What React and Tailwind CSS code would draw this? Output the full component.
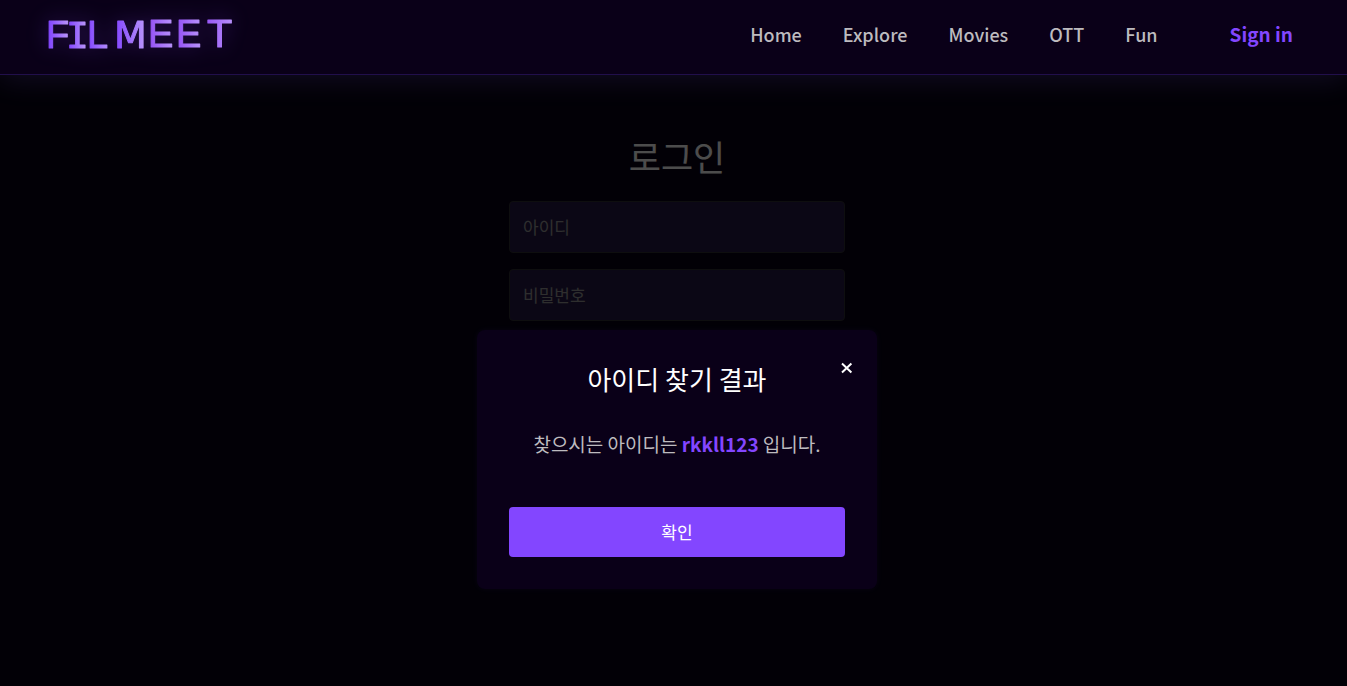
const links = ['Home', 'Explore', 'Movies', 'OTT', 'Fun'];

const SANS = 'Liberation Sans, sans-serif';
const WIDE = 'DejaVu Sans, sans-serif';

const letters = [
  { c: 'F', x: 46, y: 48, left: 49, right: 69, font: SANS },
  { c: 'I', x: 66, y: 48, left: 69, right: 86, font: 'Liberation Mono, monospace' },
  { c: 'L', x: 87, y: 48, left: 88, right: 111, font: SANS },
  { c: 'M', x: 114, y: 48, left: 115, right: 146, font: WIDE },
  { c: 'E', x: 148, y: 47, left: 149, right: 174, font: SANS },
  { c: 'E', x: 176, y: 47, left: 177, right: 202, font: SANS },
  { c: 'T', x: 208, y: 47, left: 204, right: 235, font: WIDE },
];

const stops = letters.flatMap(({ left, right }, i) => [
  { offset: left / 260, color: i < 4 ? '#8346ff' : '#9450f5' },
  { offset: right / 260, color: '#bb97fb' },
]);

function Logo() {
  return (
    <svg
      width="260"
      height="74"
      viewBox="0 0 260 74"
      role="img"
      aria-label="FILMEET"
      className="block drop-shadow-[0_0_10px_rgba(131,70,255,0.3)]"
    >
      <defs>
        <linearGradient id="wordmark" gradientUnits="userSpaceOnUse" x1="0" y1="0" x2="260" y2="0">
          {stops.map(({ offset, color }, i) => (
            <stop key={i} offset={offset} stopColor={color} />
          ))}
        </linearGradient>
      </defs>
      <text
        fontSize="38"
        fill="url(#wordmark)"
        stroke="url(#wordmark)"
        strokeWidth="1"
        strokeLinejoin="round"
      >
        {letters.map(({ c, x, y, font }, i) => (
          <tspan key={i} x={x} y={y} fontFamily={font}>
            {c}
          </tspan>
        ))}
      </text>
    </svg>
  );
}

function Header() {
  return (
    <header className="relative z-20 flex h-[75px] items-center justify-between border-b border-[#210f4b] bg-[#0a0018] pr-[54px] shadow-[0_4px_30px_rgba(131,90,230,0.14)]">
      <a href="#home">
        <Logo />
      </a>
      <nav className="flex items-center pb-1.5 text-[18px] leading-7 font-medium text-[#bdbbbf]">
        <div className="flex gap-[41px]">
          {links.map((label) => (
            <a key={label} href={'#' + label.toLowerCase()}>
              {label}
            </a>
          ))}
        </div>
        <a href="#signin" className="ml-[72px] text-[19px] font-bold text-[#8346ff]">
          Sign in
        </a>
      </nav>
    </header>
  );
}

function Field({ label, type }) {
  return (
    <input
      type={type}
      aria-label={label}
      placeholder={label}
      className="block h-[52px] w-full rounded border border-[#2f2f33] bg-[#271a48] px-[13px] pb-0.5 text-[17px] text-white placeholder:text-[#9a9a9a]"
    />
  );
}

function ResultDialog() {
  return (
    <div className="absolute inset-0 z-10 flex items-start justify-center bg-black/70 pt-[255px] pl-[7px]">
      <section
        role="dialog"
        aria-modal="true"
        aria-labelledby="result-title"
        className="relative w-full max-w-[400px] rounded-lg bg-[#0a0018] p-8 text-center shadow-[0_0_6px_rgba(131,70,255,0.06)]"
      >
        <button
          type="button"
          aria-label="닫기"
          className="absolute top-8 right-6 flex size-3 items-center justify-center text-white"
        >
          <svg viewBox="0 0 12 12" className="size-3" fill="none" stroke="currentColor" strokeWidth="2">
            <path d="M1 1.5 10.4 10.5M10.4 1.5 1 10.5" />
          </svg>
        </button>
        <h2 id="result-title" className="text-[26px] leading-[34px] font-normal text-white">
          아이디 찾기 결과
        </h2>
        <p className="mt-[34px] text-[19px] leading-7 text-[#bdbbbf]">
          찾으시는 아이디는 <strong className="font-bold text-[#8346ff]">rkkll123</strong> 입니다.
        </p>
        <button type="button" className="mt-[49px] block h-[50px] w-full rounded bg-[#8346ff] text-[17px] text-white">
          확인
        </button>
      </section>
    </div>
  );
}

export default function App() {
  return (
    <div className="flex min-h-screen flex-col bg-[#080014] font-['Noto_Sans_CJK_KR',sans-serif]">
      <Header />
      <main className="relative flex flex-1 items-start justify-center pt-14 pl-[7px]">
        <form className="flex w-full max-w-[400px] flex-col gap-4 px-8">
          <h1 className="mb-1 text-center text-[35px] leading-[50px] font-normal text-white">로그인</h1>
          <Field label="아이디" type="text" />
          <Field label="비밀번호" type="password" />
        </form>
        <ResultDialog />
      </main>
    </div>
  );
}
